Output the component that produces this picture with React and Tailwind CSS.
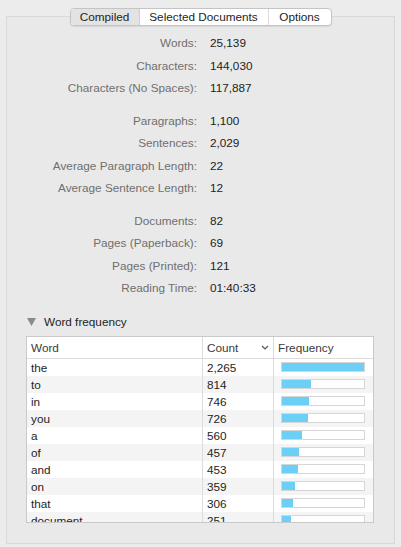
const stats = [
  [
    ["Words:", "25,139"],
    ["Characters:", "144,030"],
    ["Characters (No Spaces):", "117,887"],
  ],
  [
    ["Paragraphs:", "1,100"],
    ["Sentences:", "2,029"],
    ["Average Paragraph Length:", "22"],
    ["Average Sentence Length:", "12"],
  ],
  [
    ["Documents:", "82"],
    ["Pages (Paperback):", "69"],
    ["Pages (Printed):", "121"],
    ["Reading Time:", "01:40:33"],
  ],
];

const words = [
  ["the", 2265],
  ["to", 814],
  ["in", 746],
  ["you", 726],
  ["a", 560],
  ["of", 457],
  ["and", 453],
  ["on", 359],
  ["that", 306],
  ["document", 251],
];

const fmt = (n) => n.toLocaleString("en-US");

export default function App() {
  const max = words[0][1];
  return (
    <div
      className="w-[401px] h-[547px] bg-[#ececec] pt-[16px] px-[6px] overflow-hidden text-[11.75px] text-[#1e1e1e]"
      style={{ fontFamily: '"Liberation Sans", Arial, sans-serif' }}
    >
      <div className="h-[528px] border border-[#d9d9d9] bg-[#e9e9e9] flex flex-col">
        {/* TABS */}
        <div className="mx-auto -mt-[9px] flex h-[18px] rounded-[4px] border border-[#c4c4c4] bg-white shadow-[0_1px_1px_rgba(0,0,0,0.08)] overflow-hidden leading-[16px]">
          <div className="w-[69px] text-center bg-[#e3e3e3] border-r border-[#cfcfcf]">Compiled</div>
          <div className="w-[129px] text-center border-r border-[#dcdcdc]">Selected Documents</div>
          <div className="w-[62px] text-center">Options</div>
        </div>

        {/* STATS */}
        <div className="mt-[6px] flex flex-col gap-[10px]">
          {stats.map((group, gi) => (
            <div key={gi} className="grid grid-cols-[190px_1fr] gap-x-[13px] leading-[22.5px]">
              {group.map(([label, value]) => (
                <div key={label} className="contents">
                  <div className="text-right text-[#6f6f6f]">{label}</div>
                  <div>{value}</div>
                </div>
              ))}
            </div>
          ))}
        </div>

        {/* WORD FREQUENCY */}
        <div className="mt-[13px] ml-[20px] flex items-center gap-[8px] h-[18px]">
          <svg width="9" height="8" viewBox="0 0 9 8">
            <polygon points="0,0 9,0 4.5,8" fill="#8a8a8a" />
          </svg>
          <span>Word frequency</span>
        </div>

        <div className="mt-[5px] ml-[19px] w-[348px] h-[187px] border border-[#c9c9c9] bg-white overflow-hidden">
          <div className="flex h-[22px] leading-[21px] border-b border-[#dcdcdc] text-[#3a3a3a]">
            <div className="w-[176px] pl-[4px] border-r border-[#dcdcdc]">Word</div>
            <div className="w-[71px] pl-[4px] border-r border-[#dcdcdc] flex items-center justify-between pr-[4px]">
              <span>Count</span>
              <svg width="8" height="5" viewBox="0 0 8 5" className="mt-[1px]">
                <path d="M1 1 L4 4 L7 1" stroke="#555" strokeWidth="1.2" fill="none" />
              </svg>
            </div>
            <div className="flex-1 pl-[4px]">Frequency</div>
          </div>
          {words.map(([w, n], i) => (
            <div
              key={w}
              className={`flex h-[17px] leading-[17px] ${i % 2 === 1 ? "bg-[#f4f4f4]" : "bg-white"}`}
            >
              <div className="w-[176px] pl-[4px] border-r border-[#dcdcdc]">{w}</div>
              <div className="w-[71px] pl-[4px] border-r border-[#dcdcdc]">{fmt(n)}</div>
              <div className="flex-1 flex items-center pl-[7px]">
                <div className="w-[84px] h-[10px] bg-white border border-[#d6d6d6]">
                  <div
                    className="h-full bg-[#6ccff6]"
                    style={{ width: `${(n / max) * 100}%` }}
                  />
                </div>
              </div>
            </div>
          ))}
        </div>
      </div>
    </div>
  );
}
